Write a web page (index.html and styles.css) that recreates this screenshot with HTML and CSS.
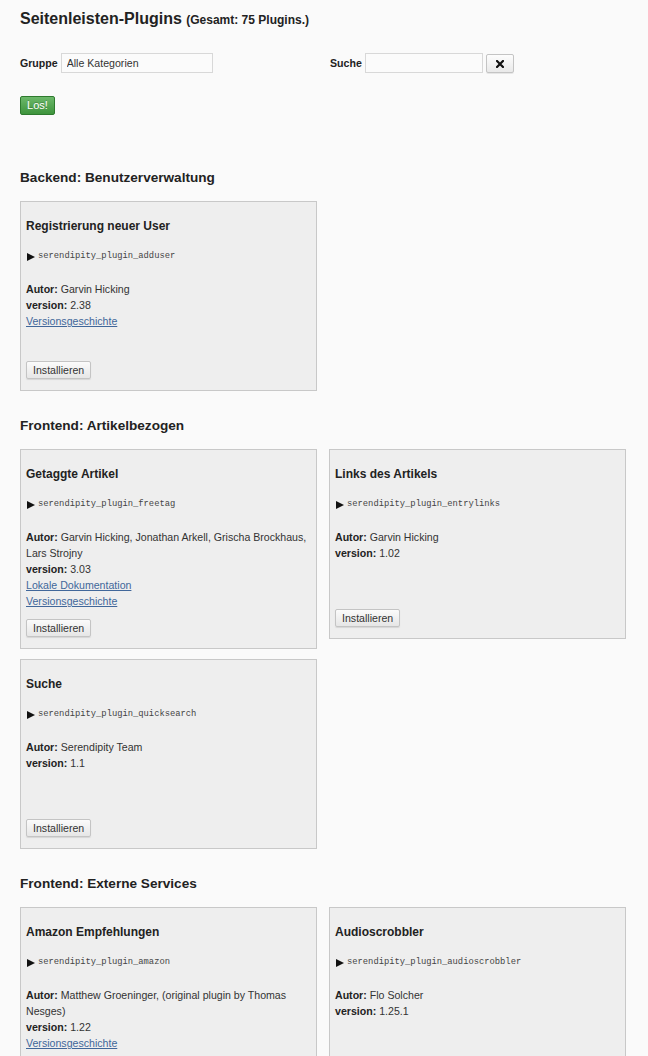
FILE: index.html
```html
<!DOCTYPE html>
<html lang="de">
<head>
<meta charset="utf-8">
<title>Seitenleisten-Plugins</title>
<link rel="stylesheet" href="styles.css">
</head>
<body>
<div class="page">
  <h2 class="page-title">Seitenleisten-Plugins <span class="total">(Gesamt: 75 Plugins.)</span></h2>

  <form class="filters">
    <div class="filter-row">
      <div class="field">
        <label class="field-label">Gruppe</label>
        <select class="select"><option>Alle Kategorien</option></select>
      </div>
      <div class="field">
        <label class="field-label">Suche</label>
        <input class="text-input" type="text">
        <button type="button" class="clear-btn" aria-label="Zurücksetzen">
          <svg width="8" height="8" viewBox="0 0 8 8"><path d="M1 1 L7 7 M7 1 L1 7" stroke="#111" stroke-width="2.2" stroke-linecap="square"/></svg>
        </button>
      </div>
    </div>
    <button type="button" class="go-btn">Los!</button>
  </form>

  <section class="group">
    <h3 class="group-title">Backend: Benutzerverwaltung</h3>
    <div class="cards">
      <div class="card">
        <h4 class="card-title">Registrierung neuer User</h4>
        <div class="plugin-id"><span class="tri"></span>serendipity_plugin_adduser</div>
        <div class="info">
          <div><b>Autor:</b> Garvin Hicking</div>
          <div><b>version:</b> 2.38</div>
          <div><a href="#">Versionsgeschichte</a></div>
        </div>
        <button type="button" class="install-btn">Installieren</button>
      </div>
    </div>
  </section>

  <section class="group">
    <h3 class="group-title">Frontend: Artikelbezogen</h3>
    <div class="cards">
      <div class="card">
        <h4 class="card-title">Getaggte Artikel</h4>
        <div class="plugin-id"><span class="tri"></span>serendipity_plugin_freetag</div>
        <div class="info">
          <div><b>Autor:</b> Garvin Hicking, Jonathan Arkell, Grischa Brockhaus, Lars Strojny</div>
          <div><b>version:</b> 3.03</div>
          <div><a href="#">Lokale Dokumentation</a></div>
          <div><a href="#">Versionsgeschichte</a></div>
        </div>
        <button type="button" class="install-btn">Installieren</button>
      </div>
      <div class="card">
        <h4 class="card-title">Links des Artikels</h4>
        <div class="plugin-id"><span class="tri"></span>serendipity_plugin_entrylinks</div>
        <div class="info">
          <div><b>Autor:</b> Garvin Hicking</div>
          <div><b>version:</b> 1.02</div>
        </div>
        <button type="button" class="install-btn">Installieren</button>
      </div>
      <div class="card">
        <h4 class="card-title">Suche</h4>
        <div class="plugin-id"><span class="tri"></span>serendipity_plugin_quicksearch</div>
        <div class="info">
          <div><b>Autor:</b> Serendipity Team</div>
          <div><b>version:</b> 1.1</div>
        </div>
        <button type="button" class="install-btn">Installieren</button>
      </div>
    </div>
  </section>

  <section class="group">
    <h3 class="group-title">Frontend: Externe Services</h3>
    <div class="cards">
      <div class="card">
        <h4 class="card-title">Amazon Empfehlungen</h4>
        <div class="plugin-id"><span class="tri"></span>serendipity_plugin_amazon</div>
        <div class="info">
          <div><b>Autor:</b> Matthew Groeninger, (original plugin by Thomas Nesges)</div>
          <div><b>version:</b> 1.22</div>
          <div><a href="#">Versionsgeschichte</a></div>
        </div>
        <button type="button" class="install-btn">Installieren</button>
      </div>
      <div class="card">
        <h4 class="card-title">Audioscrobbler</h4>
        <div class="plugin-id"><span class="tri"></span>serendipity_plugin_audioscrobbler</div>
        <div class="info">
          <div><b>Autor:</b> Flo Solcher</div>
          <div><b>version:</b> 1.25.1</div>
        </div>
        <button type="button" class="install-btn">Installieren</button>
      </div>
    </div>
  </section>
</div>
</body>
</html>
```

FILE: styles.css
```css
html, body {
  margin: 0;
  padding: 0;
  background: #fafafa;
}

body {
  font-family: "Liberation Sans", Arial, sans-serif;
  font-size: 10.6px;
  line-height: 16px;
  color: #333;
}

.page {
  padding: 9px 20px 40px;
}

.page-title {
  margin: 0;
  font-size: 16px;
  line-height: 20px;
  font-weight: bold;
  color: #222;
}

.total {
  font-size: 12px;
}

.filters {
  margin: 23px 0 0;
}

.filter-row {
  display: grid;
  grid-template-columns: 310px 1fr;
  align-items: center;
}

.field {
  display: flex;
  align-items: center;
}

.field-label {
  font-weight: bold;
  color: #222;
  margin-right: 3px;
}

.select {
  appearance: none;
  -webkit-appearance: none;
  box-sizing: border-box;
  width: 152px;
  height: 20px;
  margin: 0;
  padding: 0 5px;
  border: 1px solid #d8d8d8;
  border-radius: 0;
  background: #fbfbfb;
  font-family: inherit;
  font-size: 10.6px;
  color: #333;
}

.text-input {
  box-sizing: border-box;
  width: 118px;
  height: 20px;
  margin: 0;
  padding: 0 4px;
  border: 1px solid #d8d8d8;
  border-radius: 0;
  background: #fbfbfb;
}

.clear-btn {
  box-sizing: border-box;
  width: 28px;
  height: 19px;
  margin: 1px 0 0 3px;
  padding: 0;
  border: 1px solid #c4c4c4;
  border-radius: 2px;
  background: linear-gradient(#fdfdfd, #e9e9e9);
  box-shadow: 0 1px 0 rgba(0,0,0,0.08);
  display: flex;
  align-items: center;
  justify-content: center;
}

.go-btn {
  display: block;
  box-sizing: border-box;
  width: 35px;
  height: 19px;
  margin: 23px 0 0;
  padding: 0;
  border: 1px solid #2e7a2e;
  border-radius: 2px;
  background: linear-gradient(#6cb86a, #3e943c);
  color: #fff;
  font-family: inherit;
  font-size: 11px;
  line-height: 17px;
  text-shadow: 0 -1px 0 rgba(0,0,0,0.2);
}

.group {
  margin-top: 55px;
}

.group + .group {
  margin-top: 27px;
}

.group-title {
  margin: 0 0 15px;
  font-size: 13.6px;
  line-height: 16px;
  font-weight: bold;
  color: #222;
}

.cards {
  display: grid;
  grid-template-columns: 297px 297px;
  column-gap: 12px;
  row-gap: 10px;
  align-items: start;
}

.card {
  box-sizing: border-box;
  border: 1px solid #c8c8c8;
  background: #eeeeee;
  padding: 16px 5px 11px;
}

.card-title {
  margin: 0;
  font-size: 12px;
  line-height: 16px;
  font-weight: bold;
  color: #222;
}

.plugin-id {
  margin-top: 16px;
  height: 12px;
  line-height: 12px;
  font-family: "Liberation Mono", "Courier New", monospace;
  font-size: 8.8px;
  color: #444;
  display: flex;
  align-items: center;
}

.tri {
  display: inline-block;
  width: 0;
  height: 0;
  border-top: 4px solid transparent;
  border-bottom: 4px solid transparent;
  border-left: 8px solid #111;
  margin: 2px 3px 0 1px;
}

.info {
  margin-top: 19px;
  min-height: 70px;
}

.info b {
  color: #222;
}

.info a {
  color: #41679a;
  text-decoration: underline;
}

.install-btn {
  display: block;
  box-sizing: border-box;
  height: 18px;
  margin-top: 10px;
  padding: 0 6px;
  border: 1px solid #c4c4c4;
  border-radius: 2px;
  background: linear-gradient(#fbfbfb, #e6e6e6);
  box-shadow: 0 1px 1px rgba(0,0,0,0.1);
  font-family: inherit;
  font-size: 10.6px;
  line-height: 16px;
  color: #333;
}
```
